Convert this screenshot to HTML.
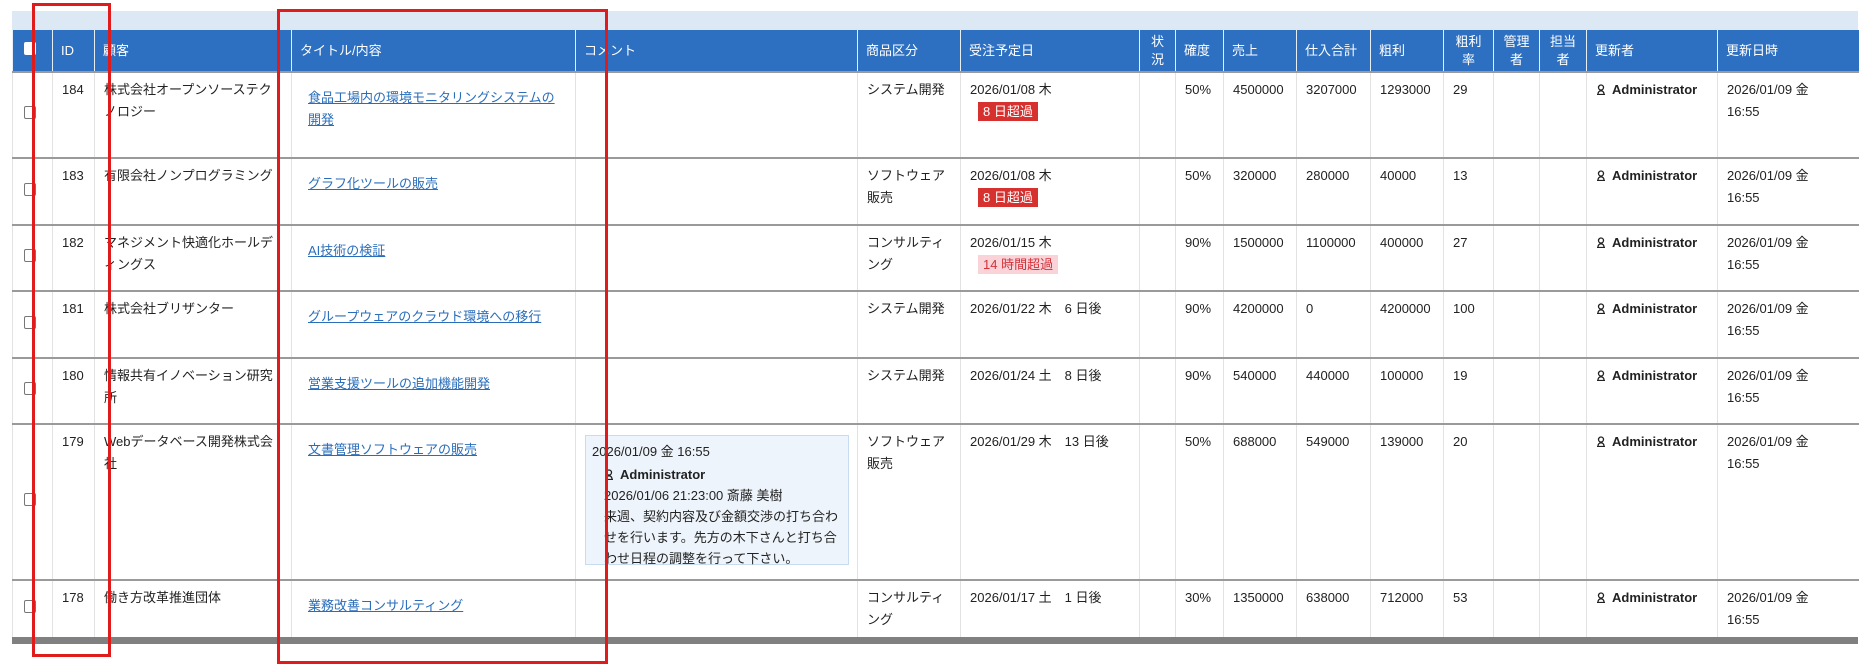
<!DOCTYPE html>
<html><head><meta charset="utf-8">
<style>
*{margin:0;padding:0;box-sizing:border-box}
body{width:1863px;height:665px;background:#fff;font-family:"Liberation Sans","Noto Sans CJK JP",sans-serif;font-size:13px;color:#222;position:relative;overflow:hidden}
.band{position:absolute;left:12px;top:11px;width:1846px;height:19px;background:#dde8f5}
table{position:absolute;left:12px;top:30px;width:1846px;border-collapse:collapse;table-layout:fixed}
th{background:#2d6fc0;color:#fff;font-weight:normal;text-align:left;padding:0 8px;height:42px;border-left:1px solid #e6eef8;line-height:18px;font-size:13px}
th.c{text-align:center;padding:0 2px}
td{vertical-align:top;padding:6px 8px 0 9px;border-left:1px solid #e2e2e2;border-top:2px solid #9a9a9a;line-height:22px}
td.cb{vertical-align:middle;padding:0 0 0 11px}
.box{display:inline-block;width:12px;height:13px;border:1px solid #777;border-radius:2px;background:#fff}
a{color:#2a6ebb;text-decoration:underline}
td.t{padding-top:14px;padding-left:16px}
.bad{display:inline-block;background:#d6312e;color:#fff;padding:0 5px;line-height:19px;margin-left:8px}
.bad2{display:inline-block;background:#f9d3d7;color:#d3323b;padding:0 5px;line-height:19px;margin-left:8px}
.adm{font-weight:bold;white-space:nowrap}
.adm svg{vertical-align:-1px;margin-right:6px}
.cmt{background:#eef4fb;border:1px solid #c8dcf1;padding:5px 6px 6px 6px;margin-top:4px;line-height:21px;height:130px;width:264px}
.bar{position:absolute;left:12px;top:637px;width:1846px;height:7px;background:#808080}
.red{position:absolute;border:3px solid #e01b1b}
</style></head><body>
<div class="band"></div>
<table>
<colgroup>
<col style="width:40px"><col style="width:42px"><col style="width:197px"><col style="width:284px"><col style="width:282px"><col style="width:103px"><col style="width:179px"><col style="width:36px"><col style="width:48px"><col style="width:73px"><col style="width:74px"><col style="width:73px"><col style="width:50px"><col style="width:46px"><col style="width:47px"><col style="width:131px"><col style="width:141px">
</colgroup>
<tr><th style="padding-left:11px"><span class="box" style="border-color:#fff"></span></th><th>ID</th><th>顧客</th><th>タイトル/内容</th><th>コメント</th><th>商品区分</th><th>受注予定日</th><th class="c">状<br>況</th><th>確度</th><th>売上</th><th>仕入合計</th><th>粗利</th><th class="c">粗利<br>率</th><th class="c">管理<br>者</th><th class="c">担当<br>者</th><th>更新者</th><th>更新日時</th></tr>
<tr style="height:86px"><td class="cb"><span class="box"></span></td><td>184</td><td>株式会社オープンソーステクノロジー</td><td class="t"><a>食品工場内の環境モニタリングシステムの開発</a></td><td></td><td>システム開発</td><td>2026/01/08 木<br><span class="bad">8 日超過</span></td><td></td><td>50%</td><td>4500000</td><td>3207000</td><td>1293000</td><td>29</td><td></td><td></td><td class="adm"><svg width="10" height="11" viewBox="0 0 10 11"><circle cx="5" cy="3.5" r="2.5" fill="none" stroke="#222" stroke-width="1.3"/><path d="M1 10.5h8M2 10c0-2 1.3-3.2 3-3.2S8 8 8 10" fill="none" stroke="#222" stroke-width="1.3"/></svg>Administrator</td><td>2026/01/09 金<br>16:55</td></tr>
<tr style="height:67px"><td class="cb"><span class="box"></span></td><td>183</td><td>有限会社ノンプログラミング</td><td class="t"><a>グラフ化ツールの販売</a></td><td></td><td>ソフトウェア販売</td><td>2026/01/08 木<br><span class="bad">8 日超過</span></td><td></td><td>50%</td><td>320000</td><td>280000</td><td>40000</td><td>13</td><td></td><td></td><td class="adm"><svg width="10" height="11" viewBox="0 0 10 11"><circle cx="5" cy="3.5" r="2.5" fill="none" stroke="#222" stroke-width="1.3"/><path d="M1 10.5h8M2 10c0-2 1.3-3.2 3-3.2S8 8 8 10" fill="none" stroke="#222" stroke-width="1.3"/></svg>Administrator</td><td>2026/01/09 金<br>16:55</td></tr>
<tr style="height:66px"><td class="cb"><span class="box"></span></td><td>182</td><td>マネジメント快適化ホールディングス</td><td class="t"><a>AI技術の検証</a></td><td></td><td>コンサルティング</td><td>2026/01/15 木<br><span class="bad2">14 時間超過</span></td><td></td><td>90%</td><td>1500000</td><td>1100000</td><td>400000</td><td>27</td><td></td><td></td><td class="adm"><svg width="10" height="11" viewBox="0 0 10 11"><circle cx="5" cy="3.5" r="2.5" fill="none" stroke="#222" stroke-width="1.3"/><path d="M1 10.5h8M2 10c0-2 1.3-3.2 3-3.2S8 8 8 10" fill="none" stroke="#222" stroke-width="1.3"/></svg>Administrator</td><td>2026/01/09 金<br>16:55</td></tr>
<tr style="height:67px"><td class="cb"><span class="box"></span></td><td>181</td><td>株式会社ブリザンター</td><td class="t"><a>グループウェアのクラウド環境への移行</a></td><td></td><td>システム開発</td><td>2026/01/22 木　6 日後</td><td></td><td>90%</td><td>4200000</td><td>0</td><td>4200000</td><td>100</td><td></td><td></td><td class="adm"><svg width="10" height="11" viewBox="0 0 10 11"><circle cx="5" cy="3.5" r="2.5" fill="none" stroke="#222" stroke-width="1.3"/><path d="M1 10.5h8M2 10c0-2 1.3-3.2 3-3.2S8 8 8 10" fill="none" stroke="#222" stroke-width="1.3"/></svg>Administrator</td><td>2026/01/09 金<br>16:55</td></tr>
<tr style="height:66px"><td class="cb"><span class="box"></span></td><td>180</td><td>情報共有イノベーション研究所</td><td class="t"><a>営業支援ツールの追加機能開発</a></td><td></td><td>システム開発</td><td>2026/01/24 土　8 日後</td><td></td><td>90%</td><td>540000</td><td>440000</td><td>100000</td><td>19</td><td></td><td></td><td class="adm"><svg width="10" height="11" viewBox="0 0 10 11"><circle cx="5" cy="3.5" r="2.5" fill="none" stroke="#222" stroke-width="1.3"/><path d="M1 10.5h8M2 10c0-2 1.3-3.2 3-3.2S8 8 8 10" fill="none" stroke="#222" stroke-width="1.3"/></svg>Administrator</td><td>2026/01/09 金<br>16:55</td></tr>
<tr style="height:156px"><td class="cb"><span class="box"></span></td><td>179</td><td>Webデータベース開発株式会社</td><td class="t"><a>文書管理ソフトウェアの販売</a></td><td><div class="cmt">2026/01/09 金 16:55<div style="padding-left:12px;margin-top:2px;width:250px"><span class="adm"><svg width="10" height="11" viewBox="0 0 10 11"><circle cx="5" cy="3.5" r="2.5" fill="none" stroke="#222" stroke-width="1.3"/><path d="M1 10.5h8M2 10c0-2 1.3-3.2 3-3.2S8 8 8 10" fill="none" stroke="#222" stroke-width="1.3"/></svg>Administrator</span><br>2026/01/06 21:23:00 斎藤 美樹<br>来週、契約内容及び金額交渉の打ち合わ<br>せを行います。先方の木下さんと打ち合<br>わせ日程の調整を行って下さい。</div></div></td><td>ソフトウェア販売</td><td>2026/01/29 木　13 日後</td><td></td><td>50%</td><td>688000</td><td>549000</td><td>139000</td><td>20</td><td></td><td></td><td class="adm"><svg width="10" height="11" viewBox="0 0 10 11"><circle cx="5" cy="3.5" r="2.5" fill="none" stroke="#222" stroke-width="1.3"/><path d="M1 10.5h8M2 10c0-2 1.3-3.2 3-3.2S8 8 8 10" fill="none" stroke="#222" stroke-width="1.3"/></svg>Administrator</td><td>2026/01/09 金<br>16:55</td></tr>
<tr style="height:57px"><td class="cb"><span class="box"></span></td><td>178</td><td>働き方改革推進団体</td><td class="t"><a>業務改善コンサルティング</a></td><td></td><td>コンサルティング</td><td>2026/01/17 土　1 日後</td><td></td><td>30%</td><td>1350000</td><td>638000</td><td>712000</td><td>53</td><td></td><td></td><td class="adm"><svg width="10" height="11" viewBox="0 0 10 11"><circle cx="5" cy="3.5" r="2.5" fill="none" stroke="#222" stroke-width="1.3"/><path d="M1 10.5h8M2 10c0-2 1.3-3.2 3-3.2S8 8 8 10" fill="none" stroke="#222" stroke-width="1.3"/></svg>Administrator</td><td>2026/01/09 金<br>16:55</td></tr>
</table>
<div class="bar"></div>
<div class="red" style="left:32px;top:3px;width:79px;height:654px"></div>
<div class="red" style="left:277px;top:9px;width:331px;height:655px"></div>
</body></html>
